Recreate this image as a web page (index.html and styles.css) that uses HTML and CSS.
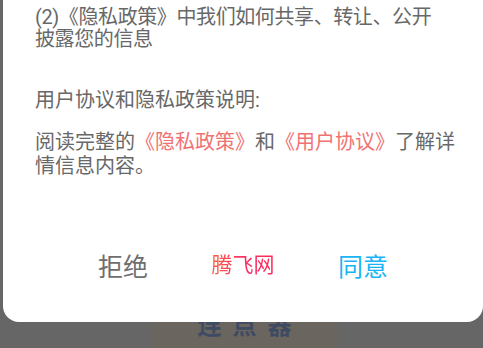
FILE: index.html
```html
<!DOCTYPE html>
<html lang="zh-CN">
<head>
<meta charset="utf-8">
<title>用户协议和隐私政策</title>
<link rel="stylesheet" href="styles.css">
</head>
<body>
  <div class="app">
    <div class="start-btn">连点器</div>
  </div>
  <div class="dialog">
    <p class="text p1">(2)《隐私政策》中我们如何共享、转让、公开<br>披露您的信息</p>
    <p class="text p2">用户协议和隐私政策说明:</p>
    <p class="text p3">阅读完整的<span class="link">《隐私政策》</span>和<span class="link">《用户协议》</span>了解详<br>情信息内容。</p>
    <div class="actions">
      <span class="action refuse">拒绝</span>
      <span class="action brand"><span class="brand-text">腾飞网</span></span>
      <span class="action agree">同意</span>
    </div>
  </div>
</body>
</html>
```

FILE: styles.css
```css
html, body {
  margin: 0;
  padding: 0;
}
body {
  width: 483px;
  height: 348px;
  overflow: hidden;
  background: #666666;
  font-family: Roboto, "Noto Sans CJK SC", sans-serif;
  position: relative;
}
.app {
  height: 348px;
  padding-top: 300px;
  box-sizing: border-box;
}
.start-btn {
  margin-left: 152px;
  width: 185px;
  height: 60px;
  line-height: 52px;
  background: #6a655e;
  color: #3e4b62;
  font-weight: bold;
  font-size: 24px;
  text-align: center;
  letter-spacing: 11px;
  text-indent: 11px;
}
.dialog {
  position: absolute;
  top: 0;
  left: 3px;
  width: 480px;
  height: 322px;
  box-sizing: border-box;
  padding: 0 0 0 32px;
  background: #ffffff;
  border-radius: 0 0 16px 16px;
}
.text {
  margin: 0;
  font-size: 20px;
  color: #686868;
  white-space: nowrap;
}
.p1 {
  margin-top: 6px;
  line-height: 22px;
  letter-spacing: -0.4px;
}
.p2 {
  margin-top: 38px;
  line-height: 24px;
}
.p3 {
  margin-top: 18px;
  line-height: 24px;
}
.link {
  color: #f07373;
}
.actions {
  margin-top: 67px;
  margin-left: -32px;
  display: flex;
  justify-content: center;
  align-items: center;
}
.action {
  width: 120px;
  text-align: center;
  line-height: 40px;
  font-size: 25px;
}
.refuse {
  color: #6e6e6e;
}
.agree {
  color: #19b4f5;
}
.brand {
  font-size: 21px;
  padding-bottom: 6px;
}
.brand-text {
  background: linear-gradient(90deg, #ff5a3c, #f8306a 50%, #ff2a55);
  -webkit-background-clip: text;
  background-clip: text;
  color: transparent;
}
```
